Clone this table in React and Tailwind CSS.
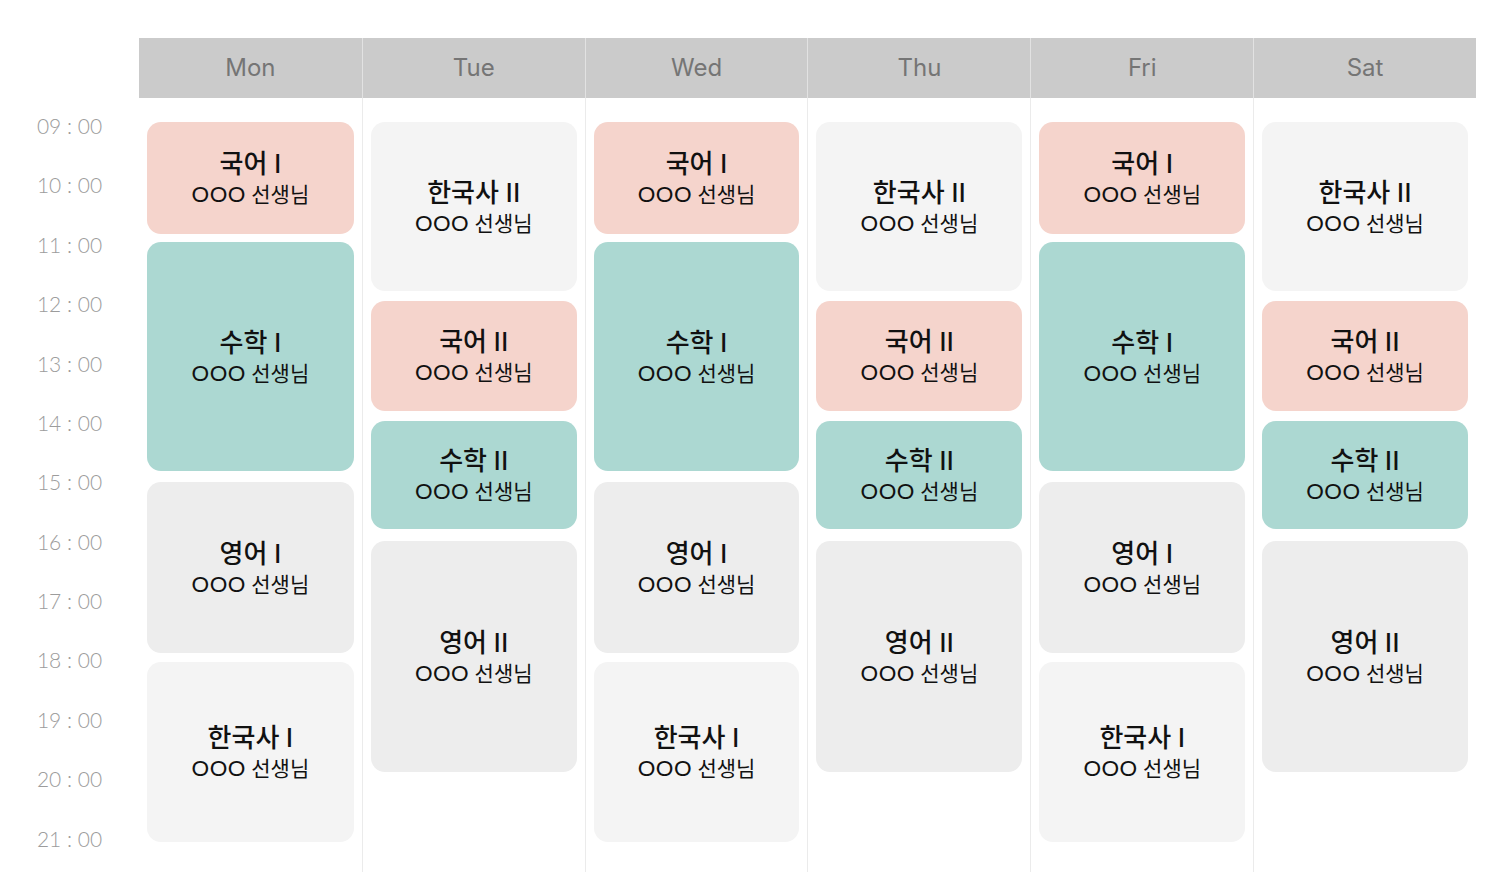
import React from "react";

const COLORS = {
  pink: "bg-[#f5d4cc]",
  teal: "bg-[#acd8d2]",
  light: "bg-[#f4f4f4]",
  gray: "bg-[#ededed]",
};

const patternA = [
  { title: "국어 I", color: "pink", mt: "mt-[24px]", h: "h-[112px]" },
  { title: "수학 I", color: "teal", mt: "mt-[8px]", h: "h-[229px]" },
  { title: "영어 I", color: "gray", mt: "mt-[11px]", h: "h-[171px]" },
  { title: "한국사 I", color: "light", mt: "mt-[9px]", h: "h-[180px]" },
];

const patternB = [
  { title: "한국사 II", color: "light", mt: "mt-[24px]", h: "h-[169px]" },
  { title: "국어 II", color: "pink", mt: "mt-[10px]", h: "h-[110px]" },
  { title: "수학 II", color: "teal", mt: "mt-[10px]", h: "h-[108px]" },
  { title: "영어 II", color: "gray", mt: "mt-[12px]", h: "h-[231px]" },
];

const days = [
  { name: "Mon", cards: patternA },
  { name: "Tue", cards: patternB },
  { name: "Wed", cards: patternA },
  { name: "Thu", cards: patternB },
  { name: "Fri", cards: patternA },
  { name: "Sat", cards: patternB },
];

const times = [
  "09 : 00", "10 : 00", "11 : 00", "12 : 00", "13 : 00", "14 : 00", "15 : 00",
  "16 : 00", "17 : 00", "18 : 00", "19 : 00", "20 : 00", "21 : 00",
];

const kr = { fontFamily: 'Lato, "Noto Sans CJK KR", "Noto Sans", sans-serif' };

function Card({ c }) {
  return (
    <div
      className={`${c.mt} ${c.h} ${COLORS[c.color]} mx-2 rounded-[14px] flex flex-col items-center justify-center text-[#111]`}
      style={kr}
    >
      <div className="text-[26px] leading-[31px] font-medium">{c.title}</div>
      <div className="text-[21px] leading-[29px] font-normal">
        <span className="text-[22px] tracking-[0.5px]">OOO</span> 선생님
      </div>
    </div>
  );
}

export default function App() {
  return (
    <div className="w-[1500px] h-[889px] bg-white flex overflow-hidden">
      <div
        className="w-[139px] pt-[96px] flex flex-col text-[#9c9c9c]"
        style={{ fontFamily: "Lato, 'Liberation Sans', sans-serif" }}
      >
        {times.map((t) => (
          <div key={t} className="h-[59.4px] flex items-center justify-center text-[21px] font-light">
            {t}
          </div>
        ))}
      </div>
      <div className="w-[1337px] pt-[38px] flex flex-col">
        <div className="grid grid-cols-6 h-[60px] bg-[#cbcbcb]">
          {days.map((d, i) => (
            <div
              key={d.name}
              className={`flex items-center justify-center text-[24px] text-[#757575] ${i > 0 ? "border-l border-[#e2e2e2]" : ""}`}
              style={{ fontFamily: "Inter, 'Noto Sans', sans-serif" }}
            >
              {d.name}
            </div>
          ))}
        </div>
        <div className="grid grid-cols-6 h-[774px]">
          {days.map((d, i) => (
            <div
              key={d.name}
              className={`flex flex-col ${i > 0 ? "border-l border-[#ebebeb]" : ""}`}
            >
              {d.cards.map((c) => (
                <Card key={c.title} c={c} />
              ))}
            </div>
          ))}
        </div>
      </div>
    </div>
  );
}
